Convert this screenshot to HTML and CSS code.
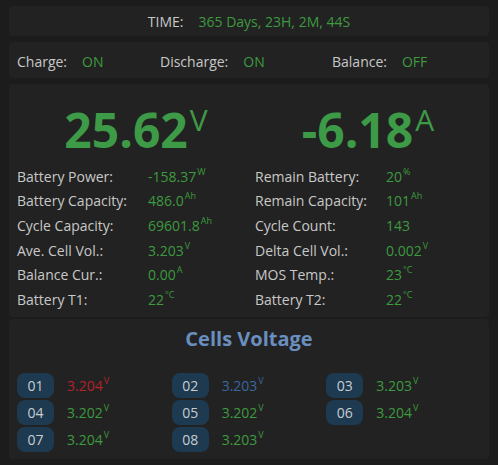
FILE: index.html
```html
<!DOCTYPE html>
<html lang="en">
<head>
    <meta charset="UTF-8">
    <title>BMS Status</title>
    <link rel="stylesheet" href="styles.css">
</head>
<body>
    <div class="card time-card">
        <span class="label">TIME:</span>
        <span class="value">365 Days, 23H, 2M, 44S</span>
    </div>

    <div class="card switch-card">
        <div class="switch"><span class="label">Charge:</span><span class="value">ON</span></div>
        <div class="switch"><span class="label">Discharge:</span><span class="value">ON</span></div>
        <div class="switch"><span class="label">Balance:</span><span class="value">OFF</span></div>
    </div>

    <div class="card main-card">
        <div class="half">
            <div class="big">25.62<sup>V</sup></div>
            <div class="row"><span class="label">Battery Power:</span><span class="value">-158.37<sup>W</sup></span></div>
            <div class="row"><span class="label">Battery Capacity:</span><span class="value">486.0<sup>Ah</sup></span></div>
            <div class="row"><span class="label">Cycle Capacity:</span><span class="value">69601.8<sup>Ah</sup></span></div>
            <div class="row"><span class="label">Ave. Cell Vol.:</span><span class="value">3.203<sup>V</sup></span></div>
            <div class="row"><span class="label">Balance Cur.:</span><span class="value">0.00<sup>A</sup></span></div>
            <div class="row"><span class="label">Battery T1:</span><span class="value">22<sup>&deg;C</sup></span></div>
        </div>
        <div class="half">
            <div class="big">-6.18<sup>A</sup></div>
            <div class="row"><span class="label">Remain Battery:</span><span class="value">20<sup>%</sup></span></div>
            <div class="row"><span class="label">Remain Capacity:</span><span class="value">101<sup>Ah</sup></span></div>
            <div class="row"><span class="label">Cycle Count:</span><span class="value">143</span></div>
            <div class="row"><span class="label">Delta Cell Vol.:</span><span class="value">0.002<sup>V</sup></span></div>
            <div class="row"><span class="label">MOS Temp.:</span><span class="value">23<sup>&deg;C</sup></span></div>
            <div class="row"><span class="label">Battery T2:</span><span class="value">22<sup>&deg;C</sup></span></div>
        </div>
    </div>

    <div class="card cells-card">
        <h3 class="cells-title">Cells Voltage</h3>
        <div class="cells" id="cells"></div>
    </div>

    <script>
        const cells = [
            { volt: "3.204", state: "max" },
            { volt: "3.203", state: "min" },
            { volt: "3.203" },
            { volt: "3.202" },
            { volt: "3.202" },
            { volt: "3.204" },
            { volt: "3.204" },
            { volt: "3.203" }
        ];

        const cellsBox = document.getElementById("cells");
        cells.forEach((cell, i) => {
            const div = document.createElement("div");
            div.className = "cell";
            const num = String(i + 1).padStart(2, "0");
            const cls = cell.state ? "cell-volt " + cell.state : "cell-volt";
            div.innerHTML = `<span class="cell-no">${num}</span><span class="${cls}">${cell.volt}<sup>V</sup></span>`;
            cellsBox.appendChild(div);
        });
    </script>
</body>
</html>
```

FILE: styles.css
```css
body {
    font-family: "Open Sans", "Noto Sans", sans-serif;
    background: #1c1c1c;
    color: #c8c8c8;
    margin: 0;
    padding: 6px 9px;
    font-size: 14px;
}

.card {
    background: #222222;
    border-radius: 4px;
    margin-bottom: 6px;
}

.label {
    color: #c8c8c8;
}

.value {
    color: #3d9a3f;
}

sup {
    font-size: 9px;
    vertical-align: top;
    position: relative;
    top: -2px;
    margin-left: 1px;
}

.time-card {
    height: 30px;
    display: flex;
    align-items: center;
    justify-content: center;
    gap: 15px;
}

.switch-card {
    height: 36px;
    display: grid;
    grid-template-columns: 143px 172px auto;
    align-items: center;
    padding: 2px 8px 0;
    box-sizing: border-box;
}

.switch {
    display: flex;
    gap: 15px;
}

.main-card {
    display: grid;
    grid-template-columns: 238px 1fr;
    padding: 16px 8px 8px;
    height: 233px;
    box-sizing: border-box;
    margin-bottom: 2px;
}

.big {
    text-align: center;
    font-size: 48px;
    font-weight: bold;
    color: #3d9a46;
    line-height: 60px;
    margin-bottom: 4px;
}

    .big sup {
        font-size: 30px;
        font-weight: normal;
        line-height: 30px;
        top: 5px;
        margin-left: 2px;
    }

.row {
    display: grid;
    grid-template-columns: 131px auto;
    height: 24.6px;
    align-items: center;
}

.cells-card {
    padding: 8px 8px 6px;
    height: 140px;
    box-sizing: border-box;
}

.cells-title {
    margin: 0;
    text-align: center;
    color: #6a8fbf;
    font-size: 20px;
    line-height: 24px;
    margin-bottom: 22px;
}

.cells {
    display: grid;
    grid-template-columns: repeat(3, 1fr);
    row-gap: 2px;
}

.cell {
    display: flex;
    align-items: center;
    gap: 13px;
}

.cell-no {
    background: #1d3a50;
    color: #c8ccd0;
    width: 37px;
    height: 25px;
    line-height: 25px;
    text-align: center;
    border-radius: 8px;
}

.cell-volt {
    color: #3d9a3f;
}

    .cell-volt.max {
        color: #b3232a;
    }

    .cell-volt.min {
        color: #3a66a0;
    }
```
